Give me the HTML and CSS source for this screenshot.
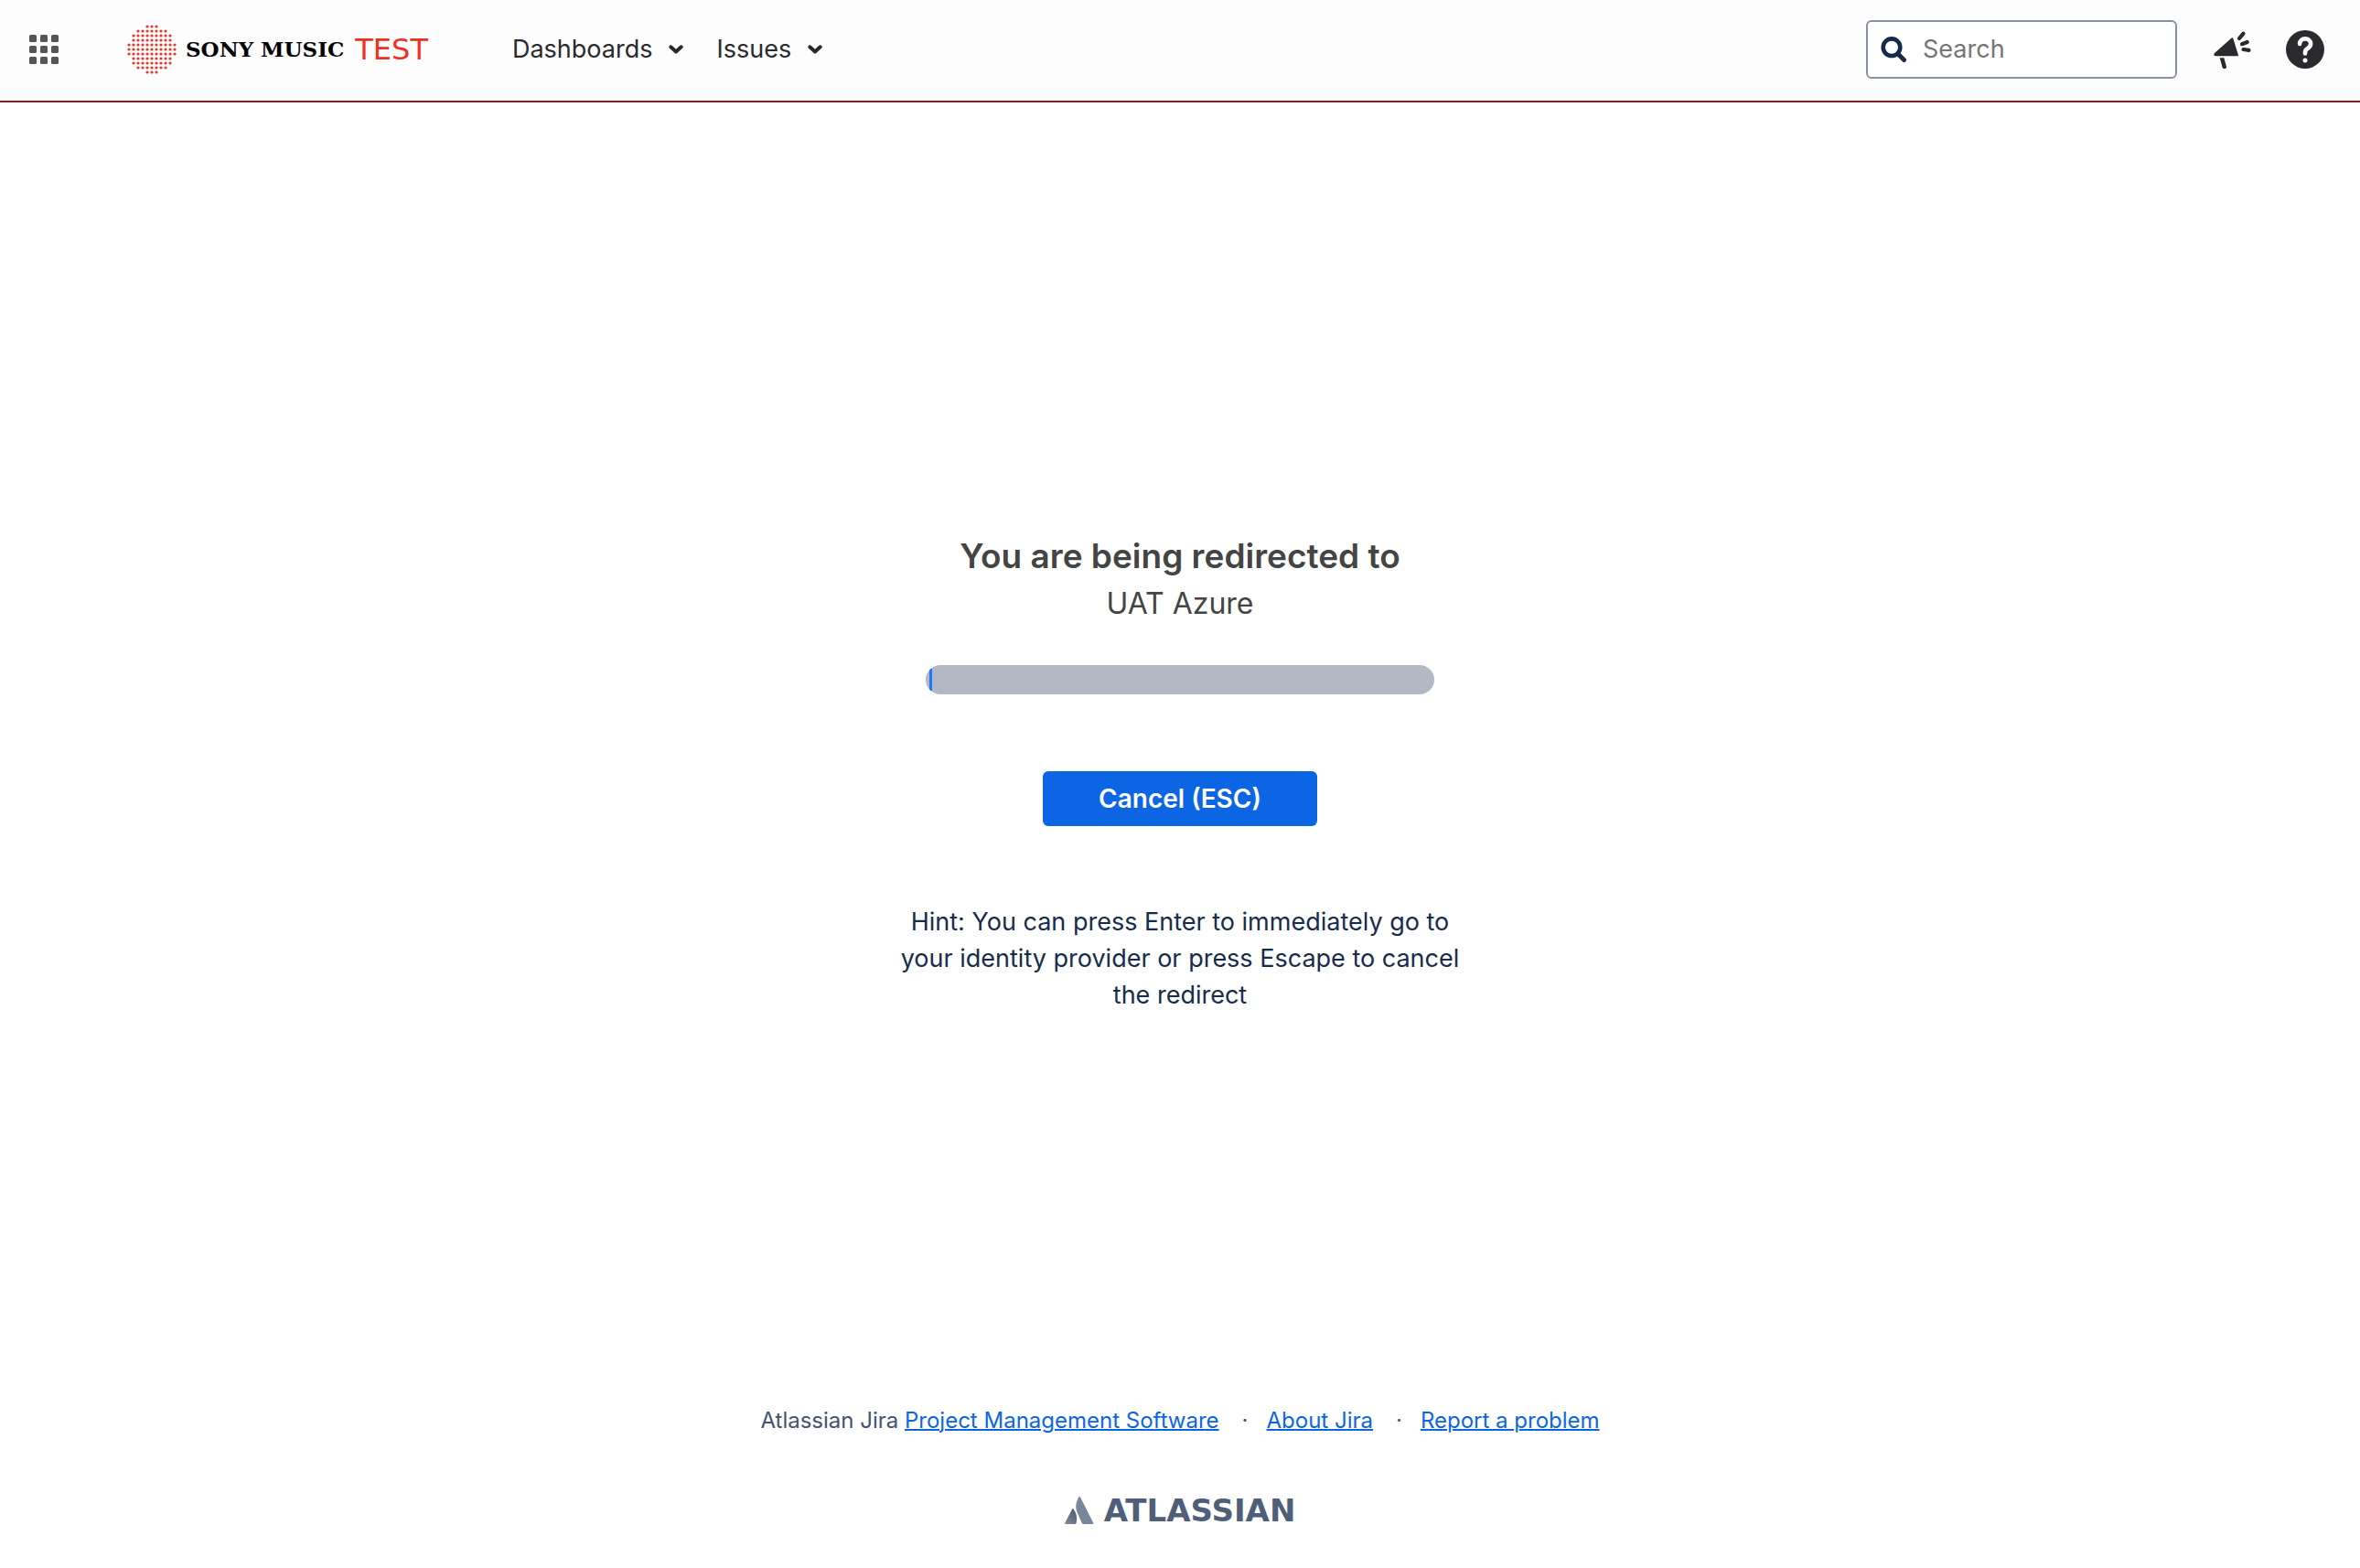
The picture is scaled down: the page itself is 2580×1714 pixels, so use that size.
FILE: index.html
```html
<!DOCTYPE html>
<html lang="en">
<head>
<meta charset="utf-8">
<meta name="viewport" content="width=device-width, initial-scale=1">
<title>Redirecting - Sony Music Jira</title>
<link rel="stylesheet" href="styles.css">
</head>
<body>
<header class="header">
  <button class="icon-button" type="button" aria-label="Linked applications">
    <svg width="32" height="32" viewBox="0 0 32 32" fill="#555"><rect width="8" height="8" rx="1.5"/><rect x="12" width="8" height="8" rx="1.5"/><rect x="24" width="8" height="8" rx="1.5"/><rect y="12" width="8" height="8" rx="1.5"/><rect x="12" y="12" width="8" height="8" rx="1.5"/><rect x="24" y="12" width="8" height="8" rx="1.5"/><rect y="24" width="8" height="8" rx="1.5"/><rect x="12" y="24" width="8" height="8" rx="1.5"/><rect x="24" y="24" width="8" height="8" rx="1.5"/></svg>
  </button>
  <a class="brand" href="#">
    <svg width="54" height="54" viewBox="0 0 54 54" fill="none" stroke="#e8352b" stroke-width="3.2" stroke-linecap="round" stroke-dasharray="0 5"><path d="M22 2h10.1M12 7h30.1M7 12h40.1M7 17h40.1M2 22h50.1M2 27h50.1M2 32h50.1M7 37h40.1M7 42h40.1M12 47h30.1M22 52h10.1"/></svg>
    <span class="brand-name">SONY MUSIC</span>
    <span class="brand-env">TEST</span>
  </a>
  <nav class="nav">
    <button class="nav-item" type="button">Dashboards
      <svg width="16" height="10" viewBox="0 0 16 10" fill="none" stroke="#292a2e" stroke-width="4" stroke-linecap="round" stroke-linejoin="round"><path d="M2.3 2.3 8 7.5l5.7-5.2"/></svg>
    </button>
    <button class="nav-item" type="button">Issues
      <svg width="16" height="10" viewBox="0 0 16 10" fill="none" stroke="#292a2e" stroke-width="4" stroke-linecap="round" stroke-linejoin="round"><path d="M2.3 2.3 8 7.5l5.7-5.2"/></svg>
    </button>
  </nav>
  <form class="search" role="search">
    <label class="search-icon" for="search" aria-label="Search">
      <svg width="28" height="28" viewBox="0 0 28 28" fill="none" stroke="#172b4d"><circle cx="12" cy="11.7" r="9.3" stroke-width="4.6"/><path d="m19.5 19.5 6 6" stroke-width="5" stroke-linecap="round"/></svg>
    </label>
    <input class="search-input" id="search" type="text" placeholder="Search">
  </form>
  <button class="icon-button" type="button" aria-label="Give feedback">
    <svg width="42" height="42" viewBox="0 0 42 42" fill="#292a2e" stroke="#292a2e" stroke-linecap="round" stroke-linejoin="round"><path d="M3 25.5 21.3 9.3 27 27.2H3.2c-1.200 0-1.200-1 -.2-1.700z" stroke-width="2"/><path d="m29 9 4.500-5.400M32 15.200l5.700-2.200M33.500 21l6 .900" stroke-width="4.200" fill="none"/><path d="M7.700 30.200h4.600l2.600 9.300c.8 2.800-3.500 3.900-4.300 1.200z" stroke="none"/></svg>
  </button>
  <button class="icon-button" type="button" aria-label="Help">
    <svg width="42" height="42" viewBox="0 0 42 42" fill="none"><circle cx="21" cy="21" r="21" fill="#292a2e"/><path d="M15 15c.2-3.600 2.600-5.600 6-5.600 3.700 0 6.100 2.200 6.100 5.300 0 2.600-1.300 4-3.400 5.300-1.900 1.200-2.700 2.200-2.700 4.400v1" stroke="#fff" stroke-width="4.600" stroke-linecap="round"/><circle cx="21" cy="33" r="2.500" fill="#fff"/></svg>
  </button>
</header>

<main class="main">
  <h1 class="title">You are being redirected to</h1>
  <p class="provider">UAT Azure</p>
  <div class="progress" role="progressbar" aria-label="Redirect progress" aria-valuenow="1" aria-valuemin="0" aria-valuemax="100">
    <div class="progress-value" style="width: 3px"></div>
  </div>
  <button class="cancel" type="button">Cancel (ESC)</button>
  <p class="hint">Hint: You can press Enter to immediately go to your identity provider or press Escape to cancel the redirect</p>
</main>

<footer class="footer">
  <ul class="footer-links">
    <li>Atlassian Jira <a href="#">Project Management Software</a></li>
    <li><a href="#">About Jira</a></li>
    <li><a href="#">Report a problem</a></li>
  </ul>
  <a class="atlassian" href="#">
    <svg width="32" height="30" viewBox="0 0 32 30"><defs><linearGradient id="shade" x1="0.9" y1="0.2" x2="0.3" y2="1"><stop offset="0" stop-color="#505f79"/><stop offset="1" stop-color="#7a869a"/></linearGradient></defs><path d="M8.200 13.600c.5-.7 1.200-.6 1.600.1 3.700 5.500 4 10.500 2.700 15.600-.2.500-.5.700-1 .7H.9c-.7 0-1.100-.6-.7-1.300z" fill="url(#shade)"/><path d="M15.200.600c.4-.8 1.400-.8 1.800 0l14.300 28.100c.3.700-.1 1.300-.8 1.300H20.300c-.6 0-1-.3-1.300-.8l-5.200-11.400c-2.600-5.800-1.800-11.200 1.400-17.200z" fill="#7a869a"/></svg>
    <span>ATLASSIAN</span>
  </a>
</footer>
</body>
</html>
```
FILE: styles.css
```css
* {
  box-sizing: border-box;
}

body {
  margin: 0;
  min-height: 100vh;
  display: flex;
  flex-direction: column;
  background: #fff;
  color: #172b4d;
  font-family: Inter, "Liberation Sans", sans-serif;
  font-size: 27px;
  line-height: 40px;
}

button {
  padding: 0;
  border: 0;
  background: none;
  color: inherit;
  font: inherit;
}

svg {
  display: block;
  flex: none;
}

.header {
  display: flex;
  align-items: center;
  height: 112px;
  padding: 0 39px 2px 32px;
  background: #fdfdfd;
  border-bottom: 2px solid #842225;
}

.brand {
  display: flex;
  align-items: center;
  margin-left: 75px;
  text-decoration: none;
}

.brand-name {
  margin-left: 10px;
  color: #000;
  font: bold 23px/32px "DejaVu Serif", serif;
}

.brand-env {
  margin-left: 12px;
  color: #ee3124;
  font: 32px/40px "DejaVu Sans", sans-serif;
}

.nav {
  display: flex;
  gap: 36px;
  margin-left: 92px;
}

.nav-item {
  display: flex;
  align-items: center;
  gap: 18px;
  color: #292a2e;
}

.search {
  display: flex;
  align-items: center;
  width: 340px;
  height: 64px;
  margin: 0 39px 0 auto;
  padding: 0 14px;
  background: #fff;
  border: 2px solid #8590a2;
  border-radius: 6px;
}

.search-input {
  flex: 1;
  min-width: 0;
  margin-left: 18px;
  padding: 0;
  border: 0;
  outline: 0;
  background: none;
  color: #172b4d;
  font: inherit;
}

.search-input::placeholder {
  color: #757575;
  opacity: 1;
}

.icon-button + .icon-button {
  margin-left: 38px;
}

.main {
  flex: 1;
  display: flex;
  flex-direction: column;
  align-items: center;
  padding: 472px 24px 84px;
  text-align: center;
}

.title {
  margin: 0;
  color: #444;
  font-size: 37px;
  font-weight: 600;
  line-height: 48px;
}

.provider {
  margin: 0;
  color: #444;
  font-size: 32px;
  line-height: 56px;
}

.progress {
  width: 100%;
  max-width: 556px;
  height: 32px;
  margin-top: 39px;
  padding: 4px;
  overflow: hidden;
  background: #b3b9c4;
  border-radius: 16px;
}

.progress-value {
  height: 100%;
  background: #1d7afc;
}

.cancel {
  width: 300px;
  height: 60px;
  margin-top: 84px;
  background: #0c66e4;
  border-radius: 6px;
  color: #fff;
  font-size: 28px;
  font-weight: 600;
}

.hint {
  max-width: 630px;
  margin: 85px 0 0;
}

.footer {
  display: flex;
  flex-direction: column;
  align-items: center;
  gap: 58px;
  padding: 0 24px 43px;
  color: #44546f;
  font-size: 24px;
}

.footer-links {
  display: flex;
  flex-wrap: wrap;
  justify-content: center;
  margin: 0;
  padding: 0;
  list-style: none;
}

.footer-links li + li::before {
  content: "·";
  margin: 0 20px 0 25px;
}

.footer-links a {
  color: #0c66e4;
  text-decoration-thickness: 2px;
}

.atlassian {
  display: flex;
  align-items: center;
  gap: 11px;
  color: #505f79;
  font: bold 34px/40px "DejaVu Sans", sans-serif;
  text-decoration: none;
}
```
